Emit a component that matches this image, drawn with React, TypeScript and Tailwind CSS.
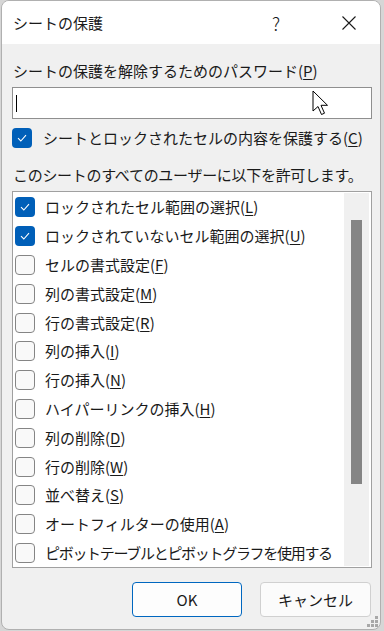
import React from 'react';

const FONT = { fontFamily: '"Noto Sans CJK JP", "Noto Sans", sans-serif' };

type Perm = { label: string; key?: string; checked?: boolean };

const perms: Perm[] = [
  { label: 'ロックされたセル範囲の選択', key: 'L', checked: true },
  { label: 'ロックされていないセル範囲の選択', key: 'U', checked: true },
  { label: 'セルの書式設定', key: 'F' },
  { label: '列の書式設定', key: 'M' },
  { label: '行の書式設定', key: 'R' },
  { label: '列の挿入', key: 'I' },
  { label: '行の挿入', key: 'N' },
  { label: 'ハイパーリンクの挿入', key: 'H' },
  { label: '列の削除', key: 'D' },
  { label: '行の削除', key: 'W' },
  { label: '並べ替え', key: 'S' },
  { label: 'オートフィルターの使用', key: 'A' },
  { label: 'ピボットテーブルとピボットグラフを使用する' },
];

function Check({ checked }: { checked?: boolean }) {
  if (checked) {
    return (
      <span className="w-[20px] h-[20px] shrink-0 rounded-[4px] bg-[#005fb8] flex items-center justify-center">
        <svg width="10" height="8" viewBox="0 0 10 8" fill="none">
          <path d="M1 4.2 L3.8 7 L9 1.2" stroke="white" strokeWidth="1.1" />
        </svg>
      </span>
    );
  }
  return <span className="w-[20px] h-[20px] shrink-0 rounded-[4px] border border-[#858585] bg-[#f9f9f9]" />;
}

function Label({ label, k }: { label: string; k?: string }) {
  return (
    <span>
      {label}
      {k && (
        <>
          (<u className="underline-offset-2">{k}</u>)
        </>
      )}
    </span>
  );
}

export default function App() {
  return (
    <div className="w-[384px] h-[631px] bg-[#d6d6d6] overflow-hidden text-[#1a1a1a]" style={FONT}>
      <div className="relative ml-px w-[380px] h-[630px] rounded-lg border border-[#b0b0b0] bg-[#f0f0f0] flex flex-col overflow-hidden">
        {/* title bar */}
        <div className="h-[43px] bg-white flex items-center pl-[11px] shrink-0">
          <span className="text-[15px] leading-5 flex-1">シートの保護</span>
          <span className="text-[18px] leading-5 w-[14px] mr-[59px] text-center font-light">?</span>
          <svg width="14" height="14" viewBox="0 0 14 14" className="mr-[24px]">
            <path d="M0.5 0.5 L13.5 13.5 M13.5 0.5 L0.5 13.5" stroke="#1a1a1a" strokeWidth="1.1" />
          </svg>
        </div>

        {/* body */}
        <div className="flex flex-col pt-[17px] pl-[10px] pr-[8px]">
          <div className="text-[15px] leading-5 pl-[1px]">
            <Label label="シートの保護を解除するためのパスワード" k="P" />
          </div>

          <div className="relative mt-[6px] w-[360px] h-[32px] bg-white border border-[#8f8f8f] flex items-center pl-[3px]">
            <span className="w-px h-[17px] bg-black" />
            <svg className="absolute left-[299px] top-[2px]" width="20" height="28" viewBox="0 0 20 28">
              <path
                d="M1 1 L1 21 L6 16.5 L9.5 24.5 L12.5 23.2 L9 15.3 L15.5 15.3 Z"
                fill="white"
                stroke="black"
                strokeWidth="1"
                strokeLinejoin="miter"
              />
            </svg>
          </div>

          <div className="mt-[9px] flex items-center gap-[11px] h-[20px] text-[15px] leading-5">
            <Check checked />
            <Label label="シートとロックされたセルの内容を保護する" k="C" />
          </div>

          <div className="mt-[17px] text-[15px] leading-5 pl-[1px] tracking-[-0.3px]">
            このシートのすべてのユーザーに以下を許可します。
          </div>

          <div className="mt-[6px] w-[360px] h-[377px] bg-white border border-[#a0a0a0] flex overflow-hidden">
            <div className="flex-1 flex flex-col pl-[2px] pt-[1px] overflow-hidden">
              {perms.map((p) => (
                <div
                  key={p.label}
                  className={
                    'h-[28.8px] shrink-0 flex items-center gap-[10px] text-[15px] leading-5 whitespace-nowrap ' +
                    (p.key ? '' : 'tracking-[-1.3px]')
                  }
                >
                  <Check checked={p.checked} />
                  <Label label={p.label} k={p.key} />
                </div>
              ))}
            </div>
            <div className="w-[25px] my-[1px] mr-[2px] bg-[#f0f0f0] shrink-0 flex justify-center">
              <div className="mt-[27px] w-[11px] h-[264px] bg-[#858585]" />
            </div>
          </div>

          <div className="mt-[14px] flex justify-end gap-[18px] pr-[1px]">
            <button className="w-[110px] h-[35px] rounded-[4px] border border-[#0067c0] bg-[#fdfdfd] text-[15px] leading-5">
              OK
            </button>
            <button className="w-[111px] h-[35px] rounded-[4px] border border-[#d0d0d0] bg-[#fbfbfb] text-[15px] leading-5">
              キャンセル
            </button>
          </div>
        </div>

        {/* resize grip */}
        <div className="absolute right-[2px] bottom-[2px] w-[11px] h-[11px]">
          <span className="absolute right-0 top-0 w-[3px] h-[3px] bg-[#a8a8a8]" />
          <span className="absolute right-0 top-[4px] w-[3px] h-[3px] bg-[#a8a8a8]" />
          <span className="absolute right-[4px] top-[4px] w-[3px] h-[3px] bg-[#a8a8a8]" />
          <span className="absolute right-0 top-[8px] w-[3px] h-[3px] bg-[#a8a8a8]" />
          <span className="absolute right-[4px] top-[8px] w-[3px] h-[3px] bg-[#a8a8a8]" />
          <span className="absolute right-[8px] top-[8px] w-[3px] h-[3px] bg-[#a8a8a8]" />
        </div>
      </div>
    </div>
  );
}
